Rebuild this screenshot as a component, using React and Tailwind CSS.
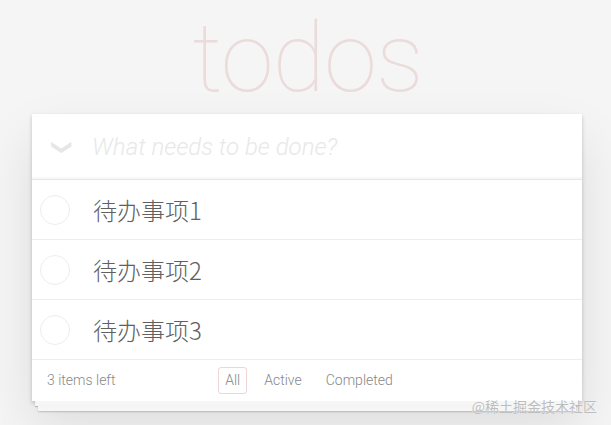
export default function App() {
  const todos = ["待办事项1", "待办事项2", "待办事项3"];

  return (
    <div className="relative min-h-screen bg-[#f5f5f5] pt-[10px] font-['Roboto','Liberation_Sans',sans-serif] overflow-hidden">
      {/* Title */}
      <h1 className="text-center text-[96px] leading-[96px] font-thin text-[rgba(175,47,47,0.13)] tracking-[-1px] pl-[4px]">
        todos
      </h1>

      {/* Card */}
      <div className="ml-[32px] mt-[8px] w-[550px]">
        <div className="bg-white shadow-[0_2px_4px_0_rgba(0,0,0,0.2),0_25px_50px_0_rgba(0,0,0,0.1)]">
          {/* New todo input */}
          <div className="flex items-center h-[66px] border-b border-[#e6e6e6] shadow-[inset_0_-2px_1px_rgba(0,0,0,0.03)]">
            <div className="w-[60px] flex justify-center">
              <span className="text-[20px] text-[#e6e6e6] rotate-90 inline-block leading-none">❯</span>
            </div>
            <span className="text-[24px] italic font-light text-[#e8e8e8]">
              What needs to be done?
            </span>
          </div>

          {/* Todo list */}
          <ul>
            {todos.map((t) => (
              <li key={t} className="flex items-center h-[60px] border-b border-[#ededed]">
                <div className="w-[61px] flex pl-[8px]">
                  <span className="w-[30px] h-[30px] rounded-full border border-[#ededed]" />
                </div>
                <span className="text-[24px] font-extralight text-[#606060] font-['Noto_Sans_CJK_SC','Roboto',sans-serif] leading-none">
                  {t}
                </span>
              </li>
            ))}
          </ul>

          {/* Footer */}
          <div className="relative flex items-center h-[41px] px-[15px] text-[14px] text-[#888]">
            <span className="font-light">3 items left</span>
            <div className="absolute left-0 right-0 flex justify-center gap-[10px] pl-[4px] font-light">
              <span className="px-[6px] py-[2px] rounded-[3px] border border-[rgba(175,47,47,0.2)]">All</span>
              <span className="px-[6px] py-[2px] rounded-[3px] border border-transparent">Active</span>
              <span className="px-[6px] py-[2px] rounded-[3px] border border-transparent">Completed</span>
            </div>
          </div>
        </div>
        {/* Stacked pages */}
        <div className="mx-[3px] h-[5px] bg-[#f6f6f6] shadow-[0_1px_1px_rgba(0,0,0,0.2)]" />
        <div className="mx-[6px] h-[5px] bg-[#f6f6f6] shadow-[0_1px_2px_rgba(0,0,0,0.2)]" />
      </div>

      {/* Watermark */}
      <span className="absolute right-[14px] top-[396px] text-[14px] text-[#bdbdbd] font-['Noto_Sans_CJK_SC',sans-serif] [text-shadow:0_0_1px_#fff]">
        @稀土掘金技术社区
      </span>
    </div>
  );
}
